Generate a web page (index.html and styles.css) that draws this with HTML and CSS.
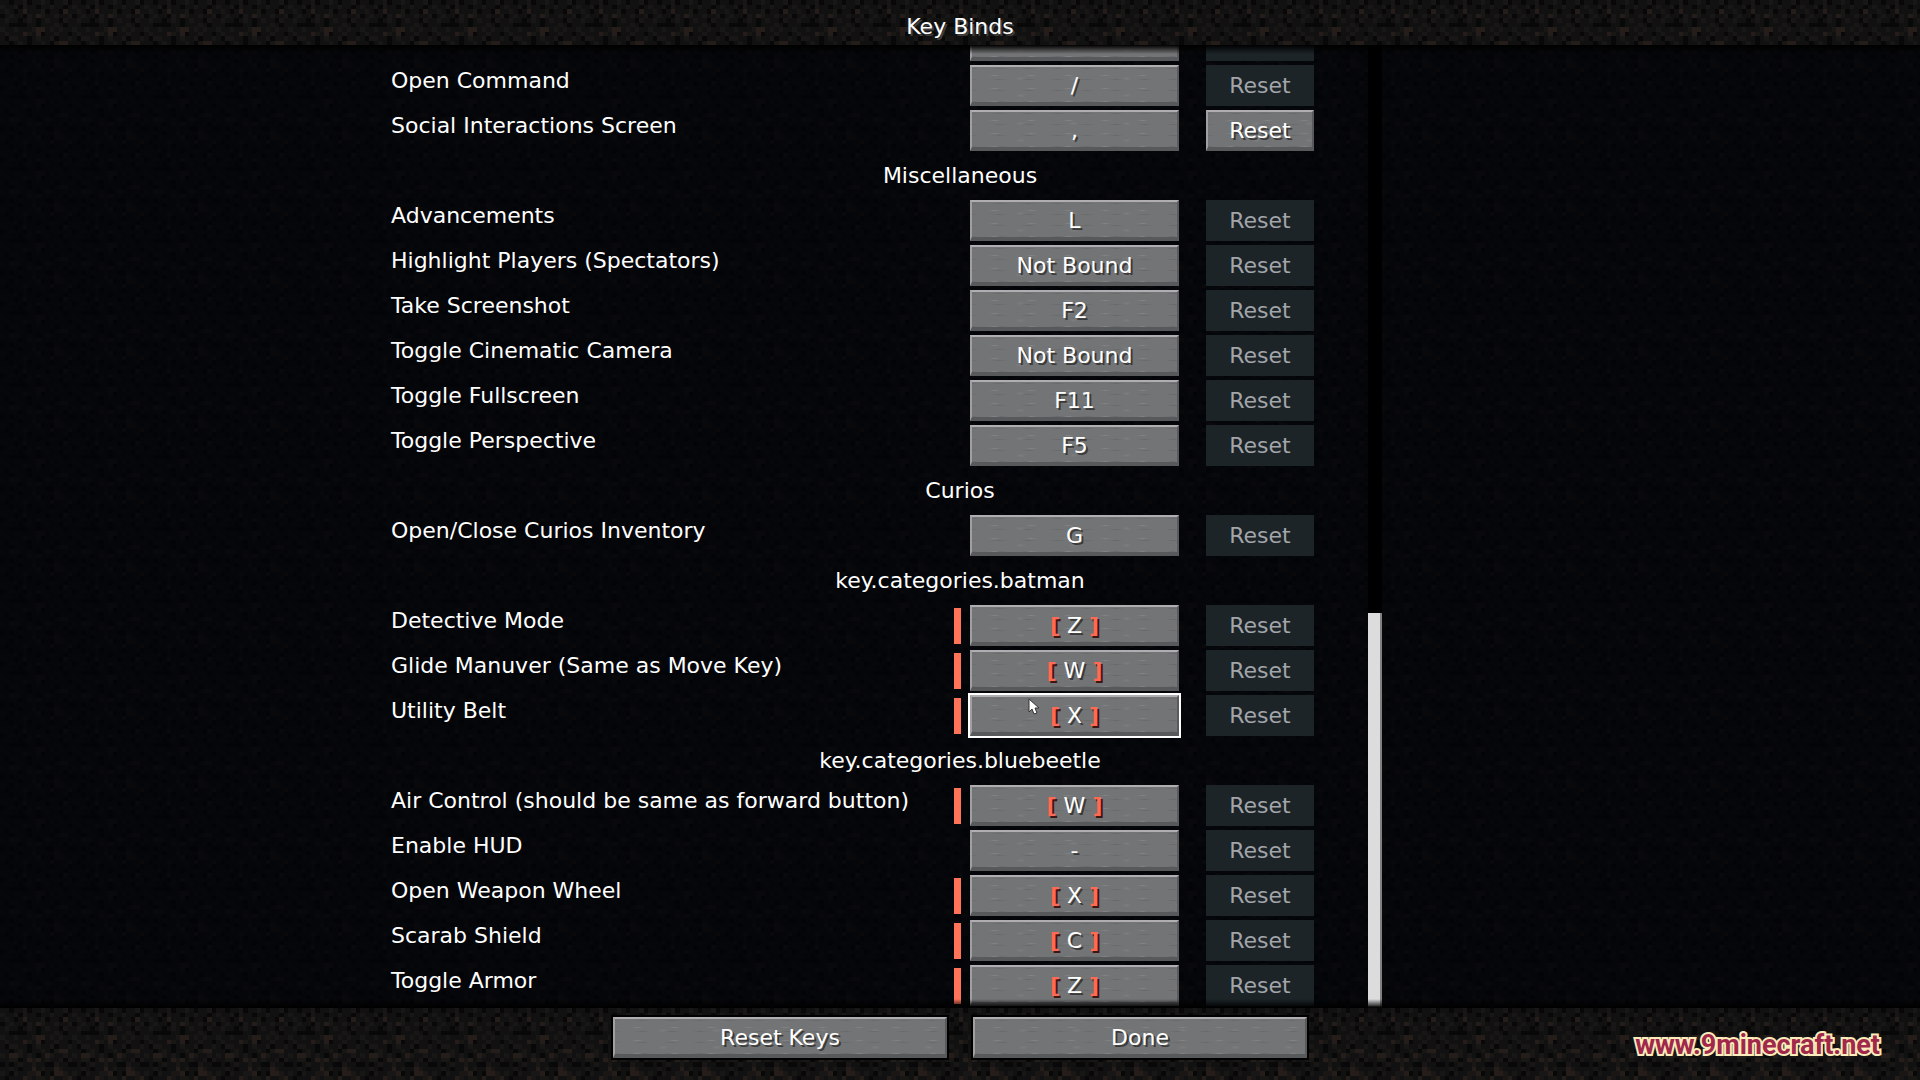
FILE: index.html
```html
<!DOCTYPE html>
<html lang="en">
<head>
    <meta charset="UTF-8">
    <meta name="viewport" content="width=device-width, initial-scale=1.0">
    <title>Key Binds</title>
    <link rel="stylesheet" href="styles.css">
</head>
<body>
    <svg class="dirt" aria-hidden="true">
        <defs>
            <pattern id="dirt" width="72" height="72" patternUnits="userSpaceOnUse">
                <svg id="dirtTile" width="72" height="72" viewBox="0 0 16 16" shape-rendering="crispEdges"></svg>
            </pattern>
        </defs>
        <rect width="100%" height="100%" fill="url(#dirt)"/>
    </svg>

    <header>
        <h1>Key Binds</h1>
    </header>

    <main>
        <div class="list">
            <div class="row"><span></span><i></i><button class="key" aria-label="Open Chat"></button><button class="reset" disabled aria-label="Reset"></button></div>
            <div class="row"><span>Open Command</span><i></i><button class="key">/</button><button class="reset" disabled>Reset</button></div>
            <div class="row"><span>Social Interactions Screen</span><i></i><button class="key">,</button><button class="reset">Reset</button></div>
            <h2>Miscellaneous</h2>
            <div class="row"><span>Advancements</span><i></i><button class="key">L</button><button class="reset" disabled>Reset</button></div>
            <div class="row"><span>Highlight Players (Spectators)</span><i></i><button class="key">Not Bound</button><button class="reset" disabled>Reset</button></div>
            <div class="row"><span>Take Screenshot</span><i></i><button class="key">F2</button><button class="reset" disabled>Reset</button></div>
            <div class="row"><span>Toggle Cinematic Camera</span><i></i><button class="key">Not Bound</button><button class="reset" disabled>Reset</button></div>
            <div class="row"><span>Toggle Fullscreen</span><i></i><button class="key">F11</button><button class="reset" disabled>Reset</button></div>
            <div class="row"><span>Toggle Perspective</span><i></i><button class="key">F5</button><button class="reset" disabled>Reset</button></div>
            <h2>Curios</h2>
            <div class="row"><span>Open/Close Curios Inventory</span><i></i><button class="key">G</button><button class="reset" disabled>Reset</button></div>
            <h2>key.categories.batman</h2>
            <div class="row conflict"><span>Detective Mode</span><i></i><button class="key"><b>[</b> Z <b>]</b></button><button class="reset" disabled>Reset</button></div>
            <div class="row conflict"><span>Glide Manuver (Same as Move Key)</span><i></i><button class="key"><b>[</b> W <b>]</b></button><button class="reset" disabled>Reset</button></div>
            <div class="row conflict"><span>Utility Belt</span><i></i><button class="key selected"><b>[</b> X <b>]</b>
                <svg class="cursor" viewBox="0 0 12 18" aria-hidden="true"><path d="M1 1V14L4 11L6 16L9 15L7 10H11Z" fill="#fff" stroke="#333"/></svg>
            </button><button class="reset" disabled>Reset</button></div>
            <h2>key.categories.bluebeetle</h2>
            <div class="row conflict"><span>Air Control (should be same as forward button)</span><i></i><button class="key"><b>[</b> W <b>]</b></button><button class="reset" disabled>Reset</button></div>
            <div class="row"><span>Enable HUD</span><i></i><button class="key">-</button><button class="reset" disabled>Reset</button></div>
            <div class="row conflict"><span>Open Weapon Wheel</span><i></i><button class="key"><b>[</b> X <b>]</b></button><button class="reset" disabled>Reset</button></div>
            <div class="row conflict"><span>Scarab Shield</span><i></i><button class="key"><b>[</b> C <b>]</b></button><button class="reset" disabled>Reset</button></div>
            <div class="row conflict"><span>Toggle Armor</span><i></i><button class="key"><b>[</b> Z <b>]</b></button><button class="reset" disabled>Reset</button></div>
        </div>
        <div class="scrollbar"><div class="thumb"></div></div>
    </main>

    <footer>
        <button>Reset Keys</button>
        <button>Done</button>
        <a class="site" href="#">www.9minecraft.net</a>
    </footer>

    <script src="dirt.js"></script>
</body>
</html>
```
FILE: styles.css
```css
* {
    box-sizing: border-box;
}

body {
    margin: 0;
    height: 100vh;
    display: flex;
    flex-direction: column;
    overflow: hidden;
    background-color: #121011;
    color: #fff;
    font-family: "DejaVu Sans", sans-serif;
    font-size: 22px;
    line-height: 26px;
}

.dirt {
    position: absolute;
    top: 0;
    left: 0;
    width: 100%;
    height: 100%;
    z-index: -1;
}

header {
    height: 45px;
    display: flex;
    justify-content: center;
    align-items: center;
    padding-top: 8px;
}

h1, h2 {
    margin: 0;
    font-size: 22px;
    font-weight: normal;
}

h1 {
    text-shadow: 2px 2px #3e3e3e;
}

/* key list, scrolled to the end */
main {
    position: relative;
    flex: 1;
    min-height: 0;
    display: flex;
    flex-direction: column;
    justify-content: flex-end;
    align-items: center;
    overflow: hidden;
    background-color: rgba(0, 3, 7, 0.74);
}

main::before, main::after {
    content: "";
    position: absolute;
    left: 0;
    right: 0;
    height: 9px;
    z-index: 1;
}

main::before {
    top: 0;
    background: linear-gradient(#000, transparent);
}

main::after {
    bottom: 0;
    background: linear-gradient(transparent, #000);
}

.list {
    width: 1138px;
}

.row {
    height: 45px;
    display: grid;
    grid-template-columns: 554px 7px 209px 126px;
    column-gap: 9px;
    align-items: center;
}

.row span {
    padding-bottom: 9px;
    white-space: nowrap;
}

.row i {
    height: 36px;
}

.conflict i {
    background-color: #ff7359;
}

.reset {
    margin-left: 18px;
    width: 108px;
}

h2 {
    height: 45px;
    line-height: 45px;
    text-align: center;
}

button {
    position: relative;
    height: 41px;
    padding: 2px 0 0;
    border: 2px solid;
    border-color: #b0aeb0 #5a5a5c #58595b #a0a0a2;
    border-bottom-width: 4px;
    background-color: #737475;
    background-image:
        radial-gradient(ellipse 6px 1px, #828385, transparent),
        radial-gradient(ellipse 8px 1px, #68696b, transparent),
        radial-gradient(ellipse 5px 2px, #7c7d7f, transparent);
    background-size: 37px 13px, 29px 11px, 53px 17px;
    background-position: 4px 2px, 13px 7px, 22px 3px;
    color: #fff;
    font: inherit;
    line-height: 26px;
    text-shadow: 2px 2px #3a3a3a;
}

button b {
    color: #ff6a55;
    text-shadow: 2px 2px #3f1512;
}

button:disabled {
    border: none;
    padding: 1px 0 0;
    background: #1c2428;
    color: #a2a5a9;
    text-shadow: none;
}

.selected {
    outline: 2px solid #fff;
}

.cursor {
    position: absolute;
    left: 56px;
    top: 1px;
    width: 12px;
    height: 18px;
}

.scrollbar {
    position: absolute;
    top: 0;
    bottom: 0;
    left: calc(50% + 408px);
    width: 14px;
    display: flex;
    align-items: flex-end;
    background-color: #000;
}

.thumb {
    width: 14px;
    height: 41%;
    background-color: #dcdcdc;
    border-right: 2px solid #808080;
    border-bottom: 2px solid #808080;
}

footer {
    position: relative;
    height: 72px;
    display: flex;
    justify-content: center;
    align-items: flex-start;
    gap: 26px;
    padding-top: 9px;
}

footer button {
    width: 334px;
    outline: 2px solid #000;
}

.site {
    position: absolute;
    right: 40px;
    top: 21px;
    color: #a0284a;
    font-family: Roboto, "Liberation Sans", sans-serif;
    font-size: 27px;
    font-weight: bold;
    line-height: 32px;
    text-decoration: none;
    -webkit-text-stroke: 4px #fcebbb;
    paint-order: stroke fill;
}
```
FILE: dirt.js
```javascript
// 16x16 dirt texture, one digit per texel
const texels = [
    '1101120112101120',
    '2112021101121101',
    '1210131112011031',
    '0121102132112112',
    '1211012101211021',
    '1100001101112101',
    '2112111233121211',
    '1211132130112110',
    '1022110121120112',
    '1101210112102331',
    '2133212101321121',
    '1122013231211202',
    '0101211211002110',
    '1121011312113211',
    '2102112230103321',
    '1011132122131123'
];
const shades = ['#080809', '#121112', '#191616', '#241d1a'];

let tile = '';
texels.forEach((line, y) => {
    [...line].forEach((t, x) => {
        tile += `<rect x="${x}" y="${y}" width="1" height="1" fill="${shades[t]}"/>`;
    });
});
document.getElementById('dirtTile').innerHTML = tile;
```
